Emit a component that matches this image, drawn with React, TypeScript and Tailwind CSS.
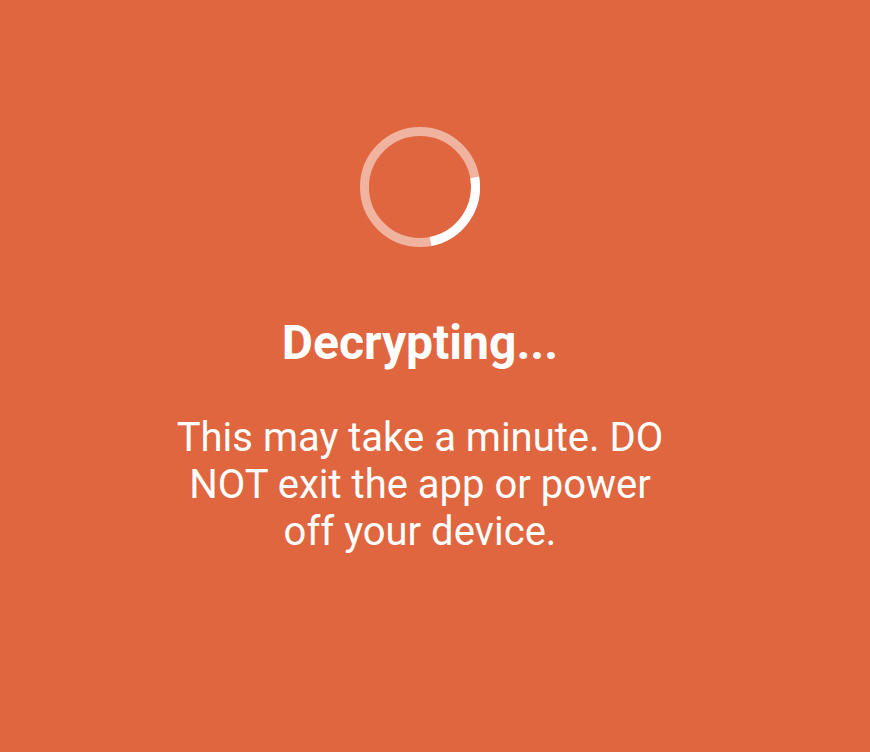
export default function App() {
  return (
    <div className="w-[870px] h-[752px] bg-[#e06640] flex flex-col items-center pr-[30px] text-white font-['Roboto',sans-serif]">
      {/* spinner */}
      <div className="mt-[127px] w-[120px] h-[120px]">
        <svg viewBox="0 0 120 120" className="w-[120px] h-[120px]">
          <circle cx="60" cy="60" r="55.5" fill="none" stroke="white" strokeOpacity={0.5} strokeWidth={9} />
          <circle
            cx="60"
            cy="60"
            r="55.5"
            fill="none"
            stroke="white"
            strokeWidth={9}
            strokeDasharray="86 400"
            transform="rotate(-10 60 60)"
          />
        </svg>
      </div>
      <h1 className="mt-[68px] text-[48px] leading-[56px] font-bold">Decrypting...</h1>
      <p className="mt-[43px] w-[496px] text-center text-[40px] leading-[47px]">
        This may take a minute. DO NOT exit the app or power off your device.
      </p>
    </div>
  );
}
